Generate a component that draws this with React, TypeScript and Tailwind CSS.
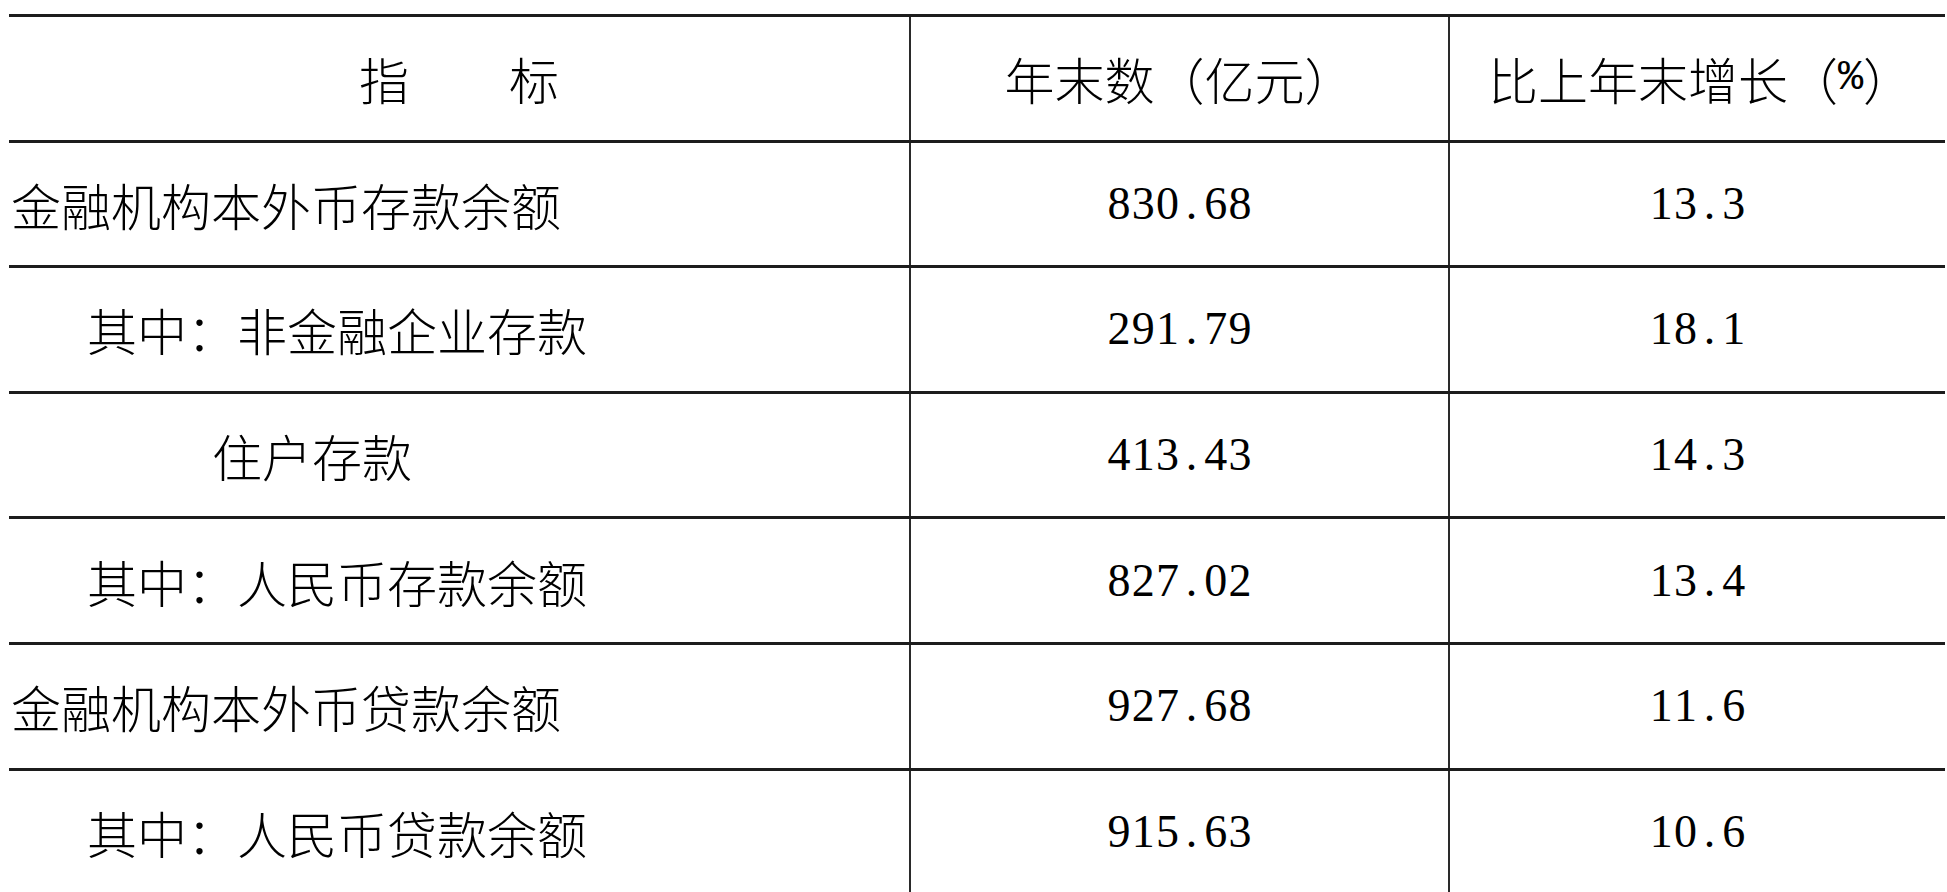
const rows: { label: string; indent: string; value: string; growth: string }[] = [
  { label: "金融机构本外币存款余额", indent: "pl-[2px]", value: "830.68", growth: "13.3" },
  { label: "其中：非金融企业存款", indent: "pl-[78px]", value: "291.79", growth: "18.1" },
  { label: "住户存款", indent: "pl-[203px]", value: "413.43", growth: "14.3" },
  { label: "其中：人民币存款余额", indent: "pl-[78px]", value: "827.02", growth: "13.4" },
  { label: "金融机构本外币贷款余额", indent: "pl-[2px]", value: "927.68", growth: "11.6" },
  { label: "其中：人民币贷款余额", indent: "pl-[78px]", value: "915.63", growth: "10.6" },
]

const cjk = "font-['Noto_Sans_CJK_SC',sans-serif] font-light text-[50px] leading-none"
const num = "font-['Liberation_Serif',serif] text-[46px] leading-none"

// half-width cells, so the point takes a full digit slot like the source font
function Num({ text }: { text: string }) {
  return (
    <span className="flex">
      {text.split("").map((c, i) => (
        <span key={i} className="inline-block w-[24.2px] text-center">
          {c}
        </span>
      ))}
    </span>
  )
}

export default function App() {
  return (
    <div className="min-h-screen bg-white pl-[9px] pr-[2px] pt-[14px] text-black">
      <div className="grid grid-cols-[900px_539px_1fr] border-t-[3px] border-[#1c1c1c]">
        <div className={`flex h-[122.6px] items-center justify-center ${cjk}`}>指　　标</div>
        <div className={`flex h-[122.6px] items-center justify-center border-l-2 border-[#2a2a2a] ${cjk}`}>
          年末数（亿元）
        </div>
        <div className={`flex h-[122.6px] items-center justify-center border-l-2 border-[#2a2a2a] pl-[6px] ${cjk}`}>
          比上年末增长（<span className="font-['Liberation_Mono',monospace] text-[42px] font-normal">%</span>）
        </div>
      </div>
      {rows.map((r) => (
        <div key={r.label + r.value} className="grid grid-cols-[900px_539px_1fr] border-t-[3px] border-[#1c1c1c]">
          <div className={`flex h-[122.6px] items-center ${r.indent} ${cjk}`}>{r.label}</div>
          <div className={`flex h-[122.6px] items-center justify-center border-l-2 border-[#2a2a2a] ${num}`}>
            <Num text={r.value} />
          </div>
          <div className={`flex h-[122.6px] items-center justify-center border-l-2 border-[#2a2a2a] ${num}`}>
            <Num text={r.growth} />
          </div>
        </div>
      ))}
    </div>
  )
}
